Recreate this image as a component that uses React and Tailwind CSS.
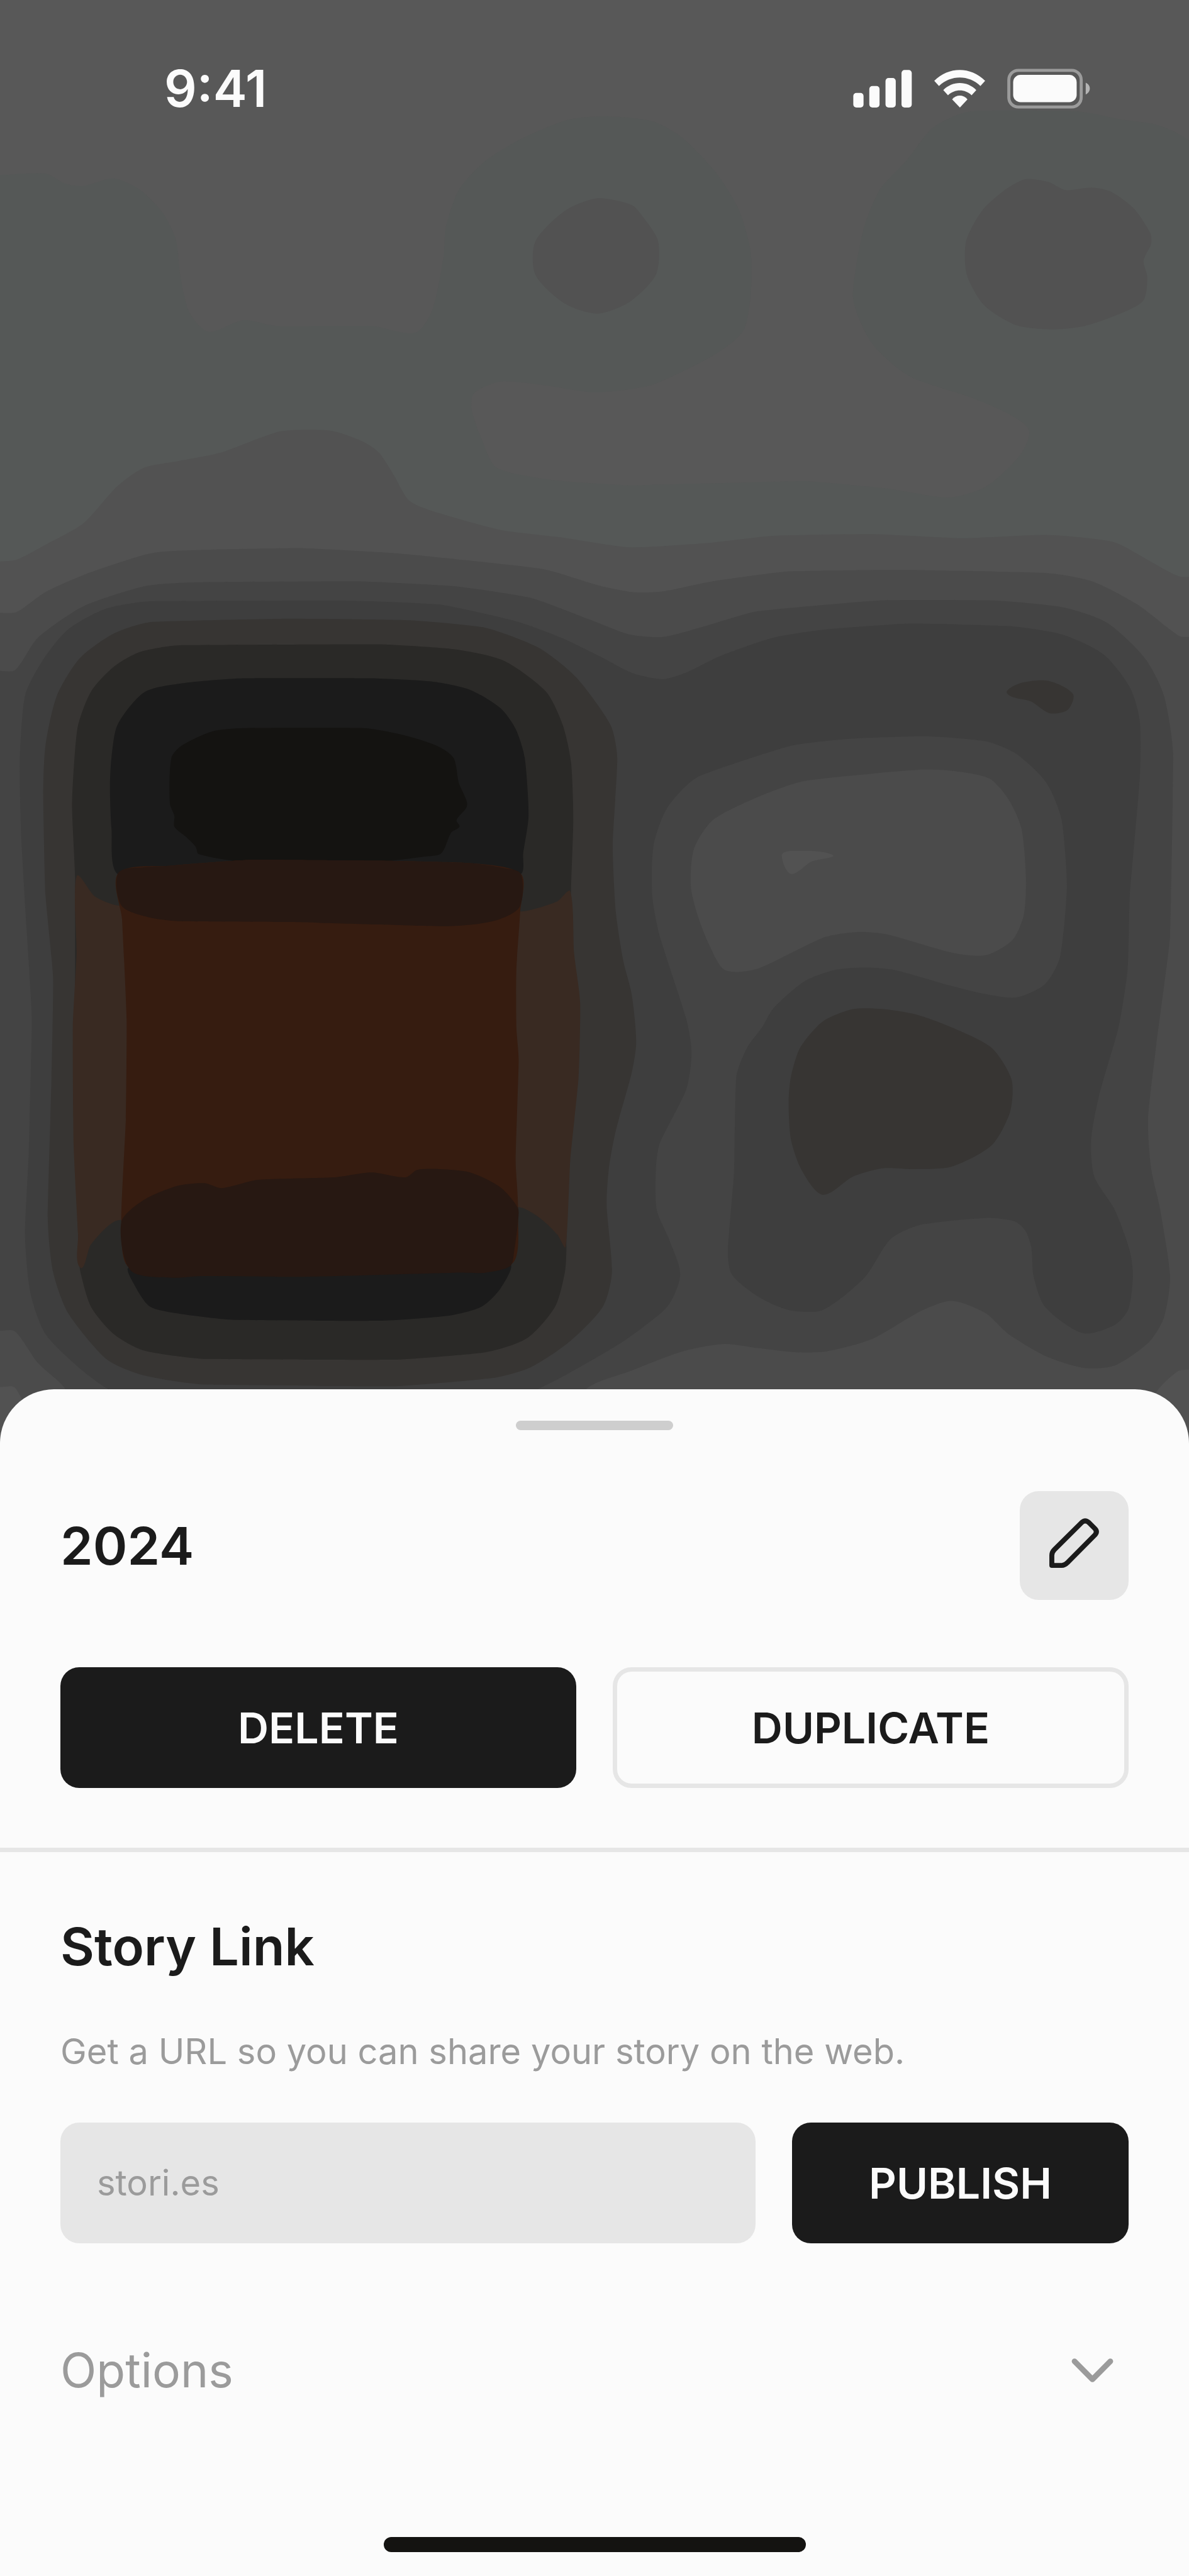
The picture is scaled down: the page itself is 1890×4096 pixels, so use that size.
import React, { useState } from "react";

// Contour bands of the blurred story cover, painted back to front
const bands = [
  {
    fill: "#555857",
    points:
      "-60,62 0,62 60,60 85,72 110,75 150,66 185,80 215,108 232,140 238,185 250,228 275,251 320,237 365,244 490,244 548,252 570,225 585,160 588,125 605,80 640,45 690,17 750,-5 800,-9 860,-3 900,17 945,60 975,105 990,155 990,205 980,250 940,280 860,315 785,324 715,315 660,311 625,325 622,345 635,380 655,415 730,430 830,436 1060,431 1170,440 1250,451 1300,438 1345,400 1357,370 1330,350 1280,330 1200,305 1150,265 1125,210 1138,130 1160,80 1195,45 1230,5 1280,-15 1420,-15 1480,-5 1520,0 1545,8 1568,20 1640,60 1640,800 -60,800",
  },
  {
    fill: "#525252",
    points:
      "706,142 745,105 787,90 833,98 850,115 868,142 865,182 830,215 788,229 745,217 706,182",
  },
  {
    fill: "#525252",
    points:
      "1274,142 1295,105 1325,80 1352,67 1382,70 1405,80 1440,77 1465,82 1495,102 1517,132 1518,145 1508,165 1513,185 1508,213 1480,228 1430,244 1385,248 1340,243 1298,219 1275,182",
  },
  {
    fill: "#525252",
    points:
      "-60,530 0,528 22,526 60,508 110,482 155,437 190,415 235,407 290,397 340,380 370,371 405,369 440,371 480,384 500,397 520,425 540,455 580,470 660,490 740,499 830,511 930,506 1020,497 1150,495 1270,500 1380,496 1470,505 1555,546 1640,550 1640,1700 -60,1700",
  },
  {
    fill: "#4b4b4b",
    points:
      "-60,590 0,590 22,589 60,565 120,541 200,518 270,514 400,512 520,518 640,529 720,538 790,557 835,565 875,564 940,552 1040,540 1190,538 1380,542 1440,552 1500,580 1555,618 1568,619 1640,620 1640,1500 1568,1503 1553,1505 1525,1530 1510,1568 1510,1700 60,1700 40,1568 20,1525 0,1524 -60,1524",
  },
  {
    fill: "#444444",
    points:
      "-60,660 0,660 20,659 50,620 110,582 190,558 260,553 470,552 600,558 700,572 780,599 830,616 875,619 930,606 1000,588 1160,575 1310,575 1400,583 1460,602 1510,645 1535,690 1547,760 1543,980 1525,1110 1514,1200 1518,1260 1530,1310 1543,1390 1535,1440 1515,1470 1470,1498 1430,1501 1380,1487 1330,1460 1300,1435 1255,1420 1215,1432 1150,1466 1090,1481 1050,1482 1000,1477 955,1472 900,1481 830,1505 775,1525 700,1600 130,1600 85,1525 50,1495 20,1457 0,1456 -60,1456",
  },
  {
    fill: "#3e3e3e",
    points:
      "26,770 33,690 58,645 90,610 140,585 200,576 450,575 580,580 680,600 740,620 790,642 835,663 875,670 905,662 950,642 1020,620 1090,610 1200,603 1330,606 1400,616 1455,640 1490,680 1503,720 1503,790 1490,930 1487,1020 1475,1090 1450,1170 1439,1225 1443,1270 1470,1310 1490,1360 1494,1390 1488,1430 1470,1449 1428,1459 1378,1427 1363,1390 1360,1355 1352,1335 1338,1324 1300,1320 1215,1328 1175,1345 1140,1392 1085,1431 1040,1431 1000,1415 965,1388 960,1360 968,1265 971,1150 985,1115 1005,1090 1020,1067 1060,1035 1100,1021 1140,1018 1180,1021 1250,1039 1300,1050 1340,1054 1378,1038 1398,1005 1407,920 1400,840 1380,795 1340,760 1300,745 1220,739 1120,742 1040,751 920,788 880,825 862,870 860,930 870,980 905,1080 912,1120 905,1165 870,1230 865,1260 866,1310 882,1345 897,1388 880,1427 820,1470 745,1510 700,1530 600,1560 250,1560 150,1530 110,1505 60,1460 40,1410 33,1340 38,1240 42,1080 35,970 28,860",
  },
  {
    fill: "#4b4b4b",
    points:
      "911,920 915,875 940,840 1000,812 1060,793 1150,784 1220,779 1260,781 1305,790 1330,815 1347,850 1353,910 1350,955 1335,985 1300,1003 1255,1000 1170,978 1130,975 1085,982 1000,1019 956,1021 935,990 920,955",
  },
  { fill: "#525252", points: "1031,882 1045,877 1098,882 1070,890 1043,905" },
  {
    fill: "#373533",
    points: "1328,687 1345,675 1382,672 1415,688 1408,707 1384,711 1360,697",
  },
  {
    fill: "#373533",
    points:
      "1040,1180 1043,1150 1055,1115 1085,1083 1125,1068 1165,1068 1210,1075 1260,1092 1308,1115 1334,1153 1332,1192 1308,1232 1255,1258 1205,1261 1165,1260 1125,1270 1085,1292 1057,1262 1043,1225",
  },
  {
    fill: "#373533",
    points:
      "57,810 60,750 75,690 105,645 150,615 200,601 380,597 540,599 640,608 710,632 760,668 805,725 814,765 808,870 812,950 822,1010 833,1050 839,1108 833,1145 812,1215 803,1260 800,1305 807,1385 795,1427 750,1470 700,1500 650,1513 520,1523 270,1521 190,1510 140,1490 90,1435 70,1385 63,1320 68,1150 70,1030 60,930",
  },
  {
    fill: "#2a2927",
    points:
      "95,820 102,730 120,685 150,655 185,637 240,629 500,628 600,634 665,648 720,685 742,725 753,770 756,840 753,925 750,1100 747,1355 745,1385 732,1427 695,1465 640,1482 520,1491 270,1490 190,1480 150,1460 120,1427 106,1385 104,1365 99,1200 99,910",
  },
  {
    fill: "#392a22",
    points:
      "101,908 125,932 155,943 300,955 560,955 690,950 735,938 752,926 757,1000 765,1060 763,1150 752,1250 746,1355 735,1340 712,1320 685,1307 400,1290 155,1323 120,1352 106,1380 103,1340 97,1230 96,1090 101,1000",
  },
  {
    fill: "#1b1b1b",
    points:
      "145,800 147,765 155,725 190,686 240,675 320,669 490,669 570,673 620,683 660,705 680,730 692,765 697,835 690,880 687,905 600,930 250,930 155,905 147,850",
  },
  {
    fill: "#141311",
    points:
      "224,820 226,765 240,750 280,733 320,729 480,729 530,737 575,750 598,765 605,795 616,822 602,840 606,848 595,855 582,880 560,884 500,890 320,890 262,881 258,872 245,860 230,848 230,835",
  },
  {
    fill: "#1b1b1b",
    points:
      "170,1380 400,1375 672,1376 660,1405 635,1427 590,1438 500,1444 310,1443 240,1436 198,1427 178,1402",
  },
  {
    fill: "#361c10",
    points:
      "156,904 225,895 330,888 500,889 620,892 687,905 686,950 681,1020 681,1090 684,1130 680,1250 683,1310 673,1376 400,1382 172,1380 160,1325 166,1200 167,1080 161,960",
  },
  {
    fill: "#271812",
    points:
      "156,904 190,897 225,895 330,888 500,889 620,892 665,898 687,905 685,945 650,962 590,968 500,966 380,963 235,962 195,957 160,943",
  },
  {
    fill: "#271812",
    points:
      "160,1325 190,1298 235,1281 270,1278 292,1284 340,1274 440,1271 490,1265 535,1271 550,1262 580,1261 620,1265 660,1283 683,1308 683,1325 678,1360 673,1378 640,1386 600,1386 400,1391 265,1390 225,1392 172,1383",
  },
];

// unit vector along the curve at b, from its two neighbours
const tangent = (a, c) => {
  const len = Math.hypot(c[0] - a[0], c[1] - a[1]) || 1;
  return [(c[0] - a[0]) / len, (c[1] - a[1]) / len];
};

// closed smooth curve through the points
const smoothPath = (points) => {
  const p = points.split(" ").map((pair) => pair.split(",").map(Number));
  const n = p.length;
  let d = `M${p[0][0]} ${p[0][1]}`;
  for (let i = 0; i < n; i++) {
    const b = p[i];
    const c = p[(i + 1) % n];
    const t1 = tangent(p[(i - 1 + n) % n], c);
    const t2 = tangent(b, p[(i + 2) % n]);
    // handles stay short, so long segments don't bulge
    const k = Math.min(Math.hypot(c[0] - b[0], c[1] - b[1]) * 0.25, 16);
    d += `C${b[0] + t1[0] * k} ${b[1] + t1[1] * k} ${c[0] - t2[0] * k} ${
      c[1] - t2[1] * k
    } ${c[0]} ${c[1]}`;
  }
  return d + "Z";
};

const StoryCover = () => (
  <svg
    className="absolute inset-x-0 top-0 w-full aspect-[1890/2362]"
    viewBox="0 -149.3 1568 1792"
    preserveAspectRatio="none"
    aria-hidden="true"
  >
    {bands.map((band, i) => (
      <path key={i} fill={band.fill} d={smoothPath(band.points)} />
    ))}
  </svg>
);

const StatusBar = () => (
  <header className="relative flex items-center justify-between pt-[93px] pl-[261px] pr-[157px] text-[#fbfbfb]">
    <time className="text-[81px] leading-[96px] font-semibold">9:41</time>
    <div className="flex items-center gap-[35px]">
      <svg className="w-[94px] h-[60px]" viewBox="112 95 286 184" fill="currentColor" aria-hidden="true">
        <rect x="112" y="208" width="50" height="71" rx="15" />
        <rect x="190" y="174" width="50" height="105" rx="15" />
        <rect x="269" y="135" width="50" height="144" rx="15" />
        <rect x="347" y="96" width="50" height="183" rx="15" />
      </svg>
      <svg className="w-[81px] h-[60px]" viewBox="504 95 248 184" fill="currentColor" aria-hidden="true">
        <path d="M504 149C574 78 682 78 752 149L729 174C672 119 585 119 527 174Z" />
        <path d="M548 194C593 148 664 148 709 194L686 219C653 188 605 188 571 219Z" />
        <path d="M591 239C612 215 645 215 666 239L629 279Z" />
      </svg>
      <svg className="w-[132px] h-[64px]" viewBox="860 91 404 194" fill="currentColor" aria-hidden="true">
        <rect x="868" y="99" width="352" height="178" rx="46" fill="none" stroke="#9b9b9b" strokeWidth="15" />
        <rect x="889" y="121" width="309" height="133" rx="36" />
        <path d="M1242 159C1254 164 1262 175 1262 187S1254 210 1242 216Z" fill="#b4b4b4" />
      </svg>
    </div>
  </header>
);

const App = () => {
  const [link, setLink] = useState("");
  const [showOptions, setShowOptions] = useState(false);

  return (
    <div className="relative flex flex-col justify-between min-h-screen bg-[#585858] font-['Inter',sans-serif]">
      <StoryCover />
      <StatusBar />

      <main className="relative flex flex-col rounded-t-[86px] bg-[#fbfbfb] pt-[50px] pb-[38px] text-[#1b1b1b]">
        <div className="w-[250px] h-[15px] mx-auto rounded-full bg-[#cecece]" />

        <div className="flex items-center justify-between mt-[97px] px-24">
          <h1 className="text-[83px] leading-[104px] font-semibold">2024</h1>
          <button
            type="button"
            aria-label="Edit"
            className="flex items-center justify-center w-[173px] h-[173px] rounded-[30px] bg-[#e6e6e6]"
          >
            <svg className="w-[79px] h-[87px]" viewBox="281 220 240 264" fill="none" stroke="currentColor" strokeWidth="24" aria-hidden="true">
              <path
                d="M293 448V400Q293 384 305 372L437 241Q454 225 472 241L500 269Q516 285 500 302L369 434Q355 448 341 448Z"
                strokeLinejoin="round"
              />
            </svg>
          </button>
        </div>

        <div className="grid grid-cols-2 gap-[58px] mt-[107px] px-24">
          <button
            type="button"
            className="h-48 rounded-[30px] bg-[#1b1b1b] text-[68px] font-semibold text-[#fbfbfb]"
          >
            DELETE
          </button>
          <button
            type="button"
            className="h-48 rounded-[30px] border-[7px] border-[#e6e6e6] text-[68px] font-semibold"
          >
            DUPLICATE
          </button>
        </div>

        <hr className="mt-[95px] border-t-[7px] border-[#e6e6e6]" />

        <section className="px-24 pt-[98px]">
          <h2 className="text-[83px] leading-[104px] font-semibold">Story Link</h2>
          <label
            htmlFor="story-link"
            className="block mt-[79px] text-[56px] leading-[72px] text-[#9b9b9b]"
          >
            Get a URL so you can share your story on the web.
          </label>
          <div className="flex gap-[58px] mt-[77px]">
            <input
              id="story-link"
              type="text"
              placeholder="stori.es"
              value={link}
              onChange={(e) => setLink(e.target.value)}
              className="flex-1 min-w-0 h-48 px-[58px] rounded-[30px] bg-[#e6e6e6] text-[56px] placeholder:text-[#9b9b9b] outline-none"
            />
            <button
              type="button"
              className="w-[535px] h-48 rounded-[30px] bg-[#1b1b1b] text-[68px] font-semibold text-[#fbfbfb]"
            >
              PUBLISH
            </button>
          </div>
          <button
            type="button"
            aria-expanded={showOptions}
            onClick={() => setShowOptions(!showOptions)}
            className="flex items-center justify-between w-full mt-[154px] pr-6 text-[75px] leading-[96px] text-[#9b9b9b]"
          >
            Options
            <svg className="w-[67px] h-[38px]" viewBox="150 151 202 116" fill="none" stroke="currentColor" strokeWidth="27" strokeLinecap="round" strokeLinejoin="round" aria-hidden="true">
              <path d="M164 165L251 253L338 165" />
            </svg>
          </button>
        </section>

        <div className="w-[671px] h-6 mt-[217px] mx-auto rounded-full bg-[#141311]" />
      </main>
    </div>
  );
};

export default App;
